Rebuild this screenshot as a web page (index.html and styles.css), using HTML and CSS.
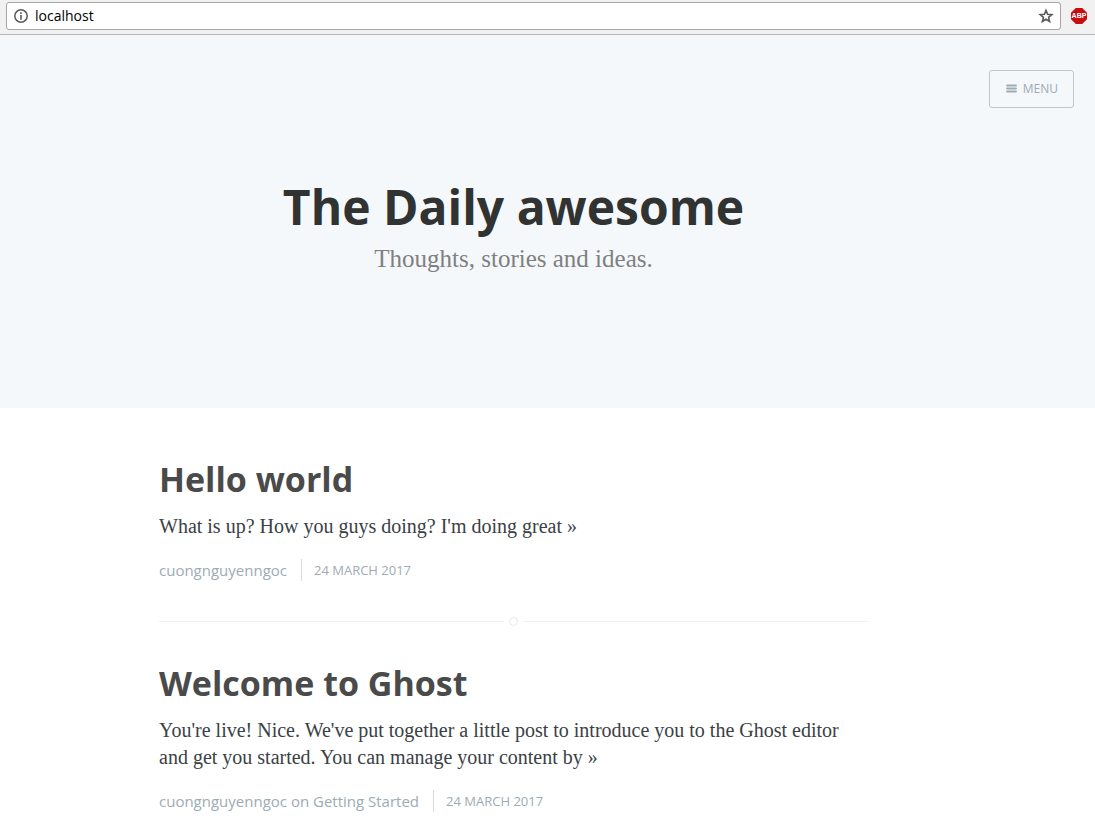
FILE: index.html
```
<!DOCTYPE html>
<html lang="en">
<head>
<meta charset="utf-8">
<meta name="viewport" content="width=device-width, initial-scale=1">
<title>The Daily awesome</title>
<link rel="stylesheet" href="styles.css">
</head>
<body>
<div class="toolbar">
  <div class="address">
    <svg class="info-icon" viewBox="0 0 14 14" aria-hidden="true"><circle cx="7" cy="7" r="6.2" fill="none" stroke="#5a5a5a" stroke-width="1.5"/><path d="M7 3.2v1.7M7 6v4.8" stroke="#5a5a5a" stroke-width="1.6"/></svg>
    <input class="address-input" type="text" value="localhost" aria-label="Address">
    <button class="icon-button" type="button" aria-label="Bookmark">
      <svg class="star-icon" viewBox="0 0 16 16"><path d="M8 2.4l1.6 3.9 4.2.3-3.2 2.8 1 4.1L8 11.3l-3.6 2.2 1-4.1-3.2-2.8 4.2-.3z" fill="none" stroke="#5a5a5a" stroke-width="1.6"/></svg>
    </button>
  </div>
  <button class="adblock" type="button">ABP</button>
</div>
<header class="hero">
  <nav class="hero-nav">
    <button class="menu-button" type="button">
      <svg class="menu-icon" viewBox="0 0 11 9" aria-hidden="true"><path d="M1 1.5h9M1 4.5h9M1 7.5h9" stroke="#9eabb3" stroke-width="1.8" stroke-linecap="round"/></svg>
      MENU
    </button>
  </nav>
  <div class="hero-text">
    <h1 class="blog-title">The Daily awesome</h1>
    <p class="blog-description">Thoughts, stories and ideas.</p>
  </div>
</header>
<main class="content">
  <article class="post">
    <h2 class="post-title"><a href="#hello-world">Hello world</a></h2>
    <p class="post-excerpt">What is up? How you guys doing? I'm doing great »</p>
    <footer class="post-meta">
      <span class="post-author"><a href="#author">cuongnguyenngoc</a></span>
      <time class="post-date" datetime="2017-03-24">24 MARCH 2017</time>
    </footer>
    <div class="divider"><span class="divider-dot"></span></div>
  </article>
  <article class="post">
    <h2 class="post-title"><a href="#welcome">Welcome to Ghost</a></h2>
    <p class="post-excerpt">You're live! Nice. We've put together a little post to introduce you to the Ghost editor and get you started. You can manage your content by »</p>
    <footer class="post-meta">
      <span class="post-author"><a href="#author">cuongnguyenngoc</a> on <a href="#getting-started">Getting Started</a></span>
      <time class="post-date" datetime="2017-03-24">24 MARCH 2017</time>
    </footer>
  </article>
</main>
</body>
</html>
```
FILE: styles.css
```
* {
  box-sizing: border-box;
}

body {
  margin: 0;
  background: #fff;
  color: #3a4145;
  font-family: "Open Sans", sans-serif;
}

a {
  color: inherit;
  text-decoration: none;
}

button {
  padding: 0;
  border: 0;
  background: none;
  font-family: inherit;
}

.toolbar {
  display: flex;
  align-items: flex-start;
  gap: 10px;
  height: 35px;
  padding: 2px 8px 0 6px;
  border-bottom: 1px solid #b6b4b6;
  background: #f2f1f2;
}

.address {
  display: flex;
  flex: 1;
  align-items: center;
  gap: 7px;
  height: 28px;
  padding: 0 6px 0 7px;
  border: 1px solid #a5a5a5;
  border-radius: 3px;
  background: #fff;
}

.info-icon {
  width: 14px;
  height: 14px;
}

.address-input {
  flex: 1;
  min-width: 0;
  padding: 0;
  border: 0;
  outline: 0;
  color: #000;
  font: 14px/20px "Open Sans", sans-serif;
}

.icon-button,
.star-icon {
  display: block;
  width: 16px;
  height: 16px;
}

.adblock {
  width: 16px;
  height: 16px;
  margin-top: 6px;
  background: #c70d12;
  clip-path: polygon(30% 0, 70% 0, 100% 30%, 100% 70%, 70% 100%, 30% 100%, 0 70%, 0 30%);
  color: #fff;
  font: bold 7px/16px "Liberation Sans", sans-serif;
  text-align: center;
}

.hero {
  padding: 35px 21px 134px;
  background: #f4f8fb;
}

.hero-nav {
  display: flex;
  justify-content: flex-end;
}

.menu-button {
  display: flex;
  align-items: center;
  gap: 6px;
  height: 38px;
  padding: 0 15px 1px 16px;
  border: 1px solid #bfc8cd;
  border-radius: 3px;
  color: #9eabb3;
  font-size: 12px;
}

.menu-icon {
  width: 11px;
  height: 9px;
}

.hero-text {
  padding: 69px 68px 0 0;
  text-align: center;
}

.blog-title {
  margin: 0;
  color: #303332;
  font-size: 48px;
  line-height: 60px;
}

.blog-description {
  margin: 7px 0 0;
  color: #808080;
  font: 25px/30px "Liberation Serif", serif;
}

.content {
  max-width: 777px;
  margin: 0 auto;
  padding: 49px 68px 20px 0;
}

.post-title {
  margin: 0;
  color: #4a4a4a;
  font-size: 34px;
  line-height: 44px;
}

.post-excerpt {
  margin: 12px 0 0;
  font: 20px/27px "Liberation Serif", serif;
}

.post-meta {
  display: flex;
  align-items: center;
  margin-top: 19px;
  color: #9eabb3;
  line-height: 22px;
}

.post-author {
  font-size: 15px;
}

.post-date {
  margin-left: 14px;
  padding-left: 12px;
  border-left: 1px solid #d5dbde;
  font-size: 13px;
}

.divider {
  display: flex;
  align-items: center;
  gap: 5px;
  margin: 36px 0 35px;
}

.divider::before,
.divider::after {
  content: "";
  flex: 1;
  height: 1px;
  background: #ebf2f2;
}

.divider-dot {
  width: 9px;
  height: 9px;
  border: 1px solid #e3ecec;
  border-radius: 50%;
}
```
